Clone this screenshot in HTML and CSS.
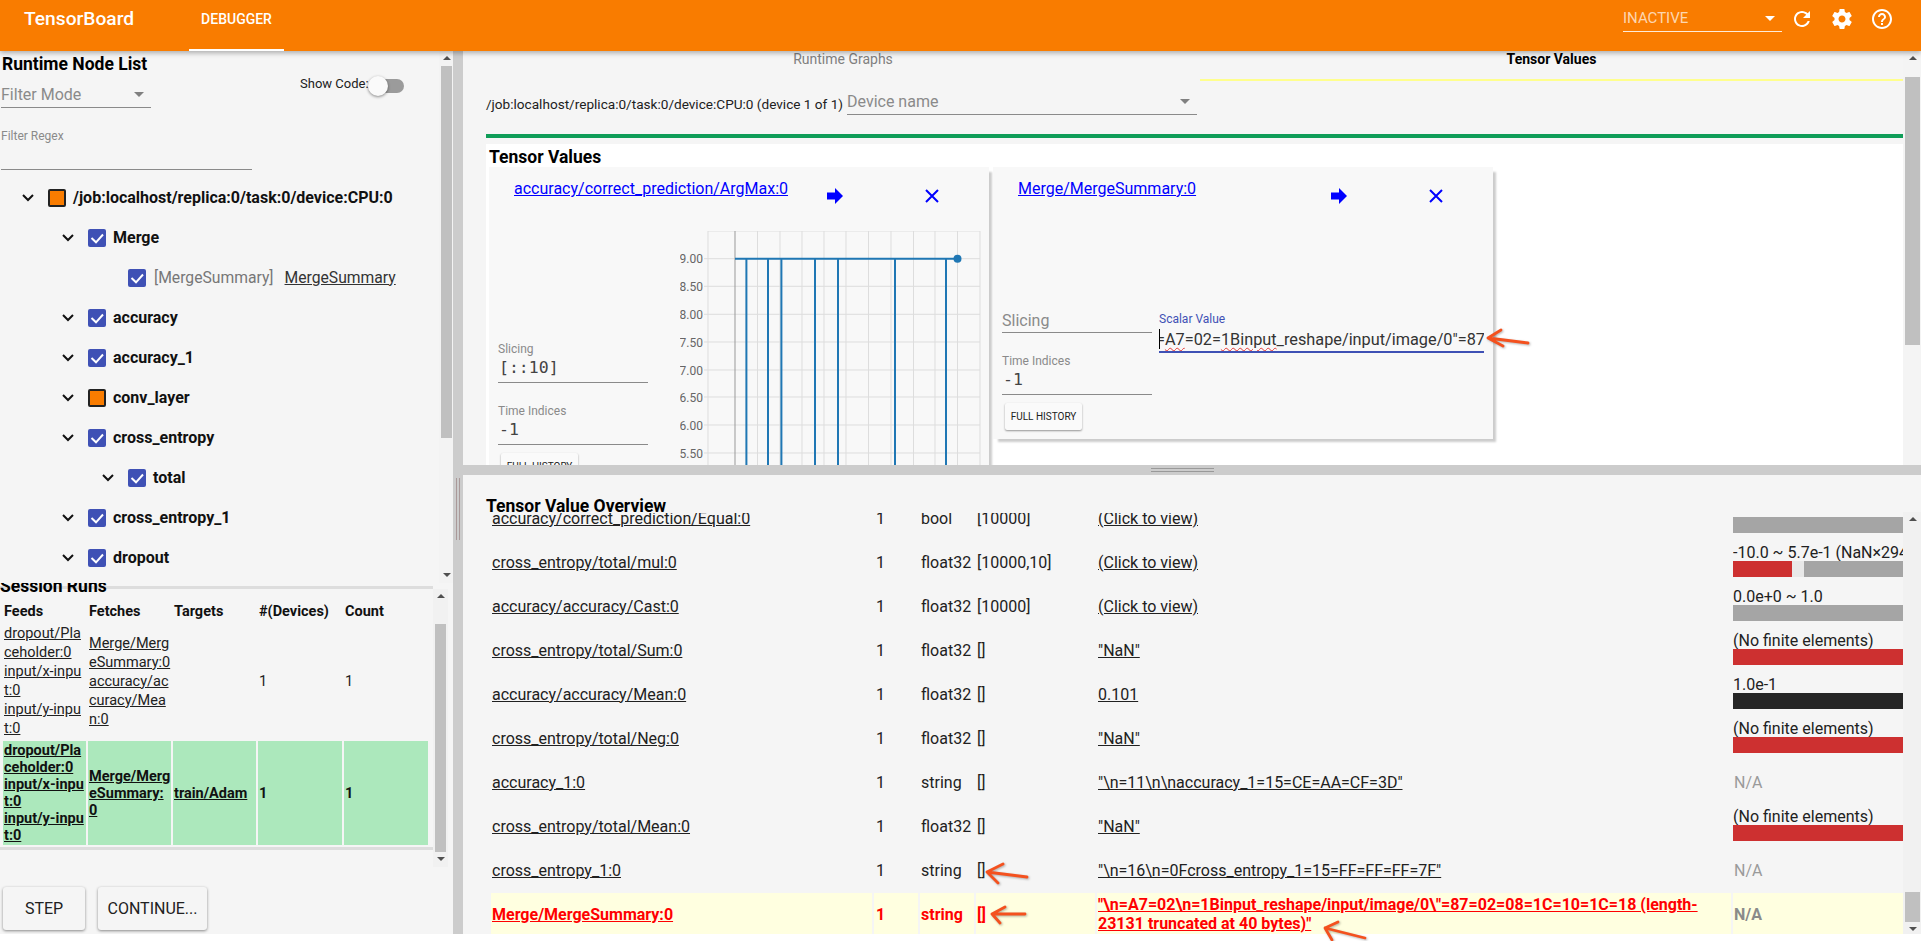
FILE: index.html
```html
<!DOCTYPE html>
<html lang="en">
<head>
<meta charset="utf-8">
<title>TensorBoard</title>
<link rel="stylesheet" href="styles.css">
</head>
<body>
<svg class="defs" width="0" height="0" aria-hidden="true">
  <symbol id="chev" viewBox="0 0 12 8"><polyline points="1,1 6,6 11,1" fill="none" stroke="#111" stroke-width="2"/></symbol>
  <symbol id="check" viewBox="0 0 18 18"><polyline points="3.500,9 8,13.300 15,5.500" fill="none" stroke="#fff" stroke-width="2"/></symbol>
  <symbol id="arrow" viewBox="0 0 16 16"><path d="M0 4.500H8V0L16 8L8 16V11.500H0Z" fill="#0000ff"/></symbol>
  <symbol id="close" viewBox="0 0 14 14"><path d="M1 1L13 13M13 1L1 13" fill="none" stroke="#0000ff" stroke-width="2"/></symbol>
</svg>
<div class="app">
  <header class="topbar">
    <div class="brand">TensorBoard</div>
    <div class="tab">DEBUGGER</div>
    <div class="run-select"><span>INACTIVE</span><i class="caret caret-white"></i></div>
    <svg class="ticon" viewBox="0 0 24 24"><path d="M17.65 6.35C16.2 4.9 14.21 4 12 4c-4.42 0-7.99 3.58-7.99 8s3.57 8 7.99 8c3.73 0 6.84-2.55 7.73-6h-2.08c-.82 2.33-3.04 4-5.65 4-3.31 0-6-2.69-6-6s2.69-6 6-6c1.66 0 3.14.69 4.22 1.78L13 11h7V4l-2.35 2.35z"/></svg>
    <svg class="ticon" viewBox="0 0 24 24"><path d="M19.43 12.98c.04-.32.07-.64.07-.98s-.03-.66-.07-.98l2.11-1.65c.19-.15.24-.42.12-.64l-2-3.46c-.12-.22-.39-.3-.61-.22l-2.49 1c-.52-.4-1.08-.73-1.69-.98l-.38-2.65C14.46 2.18 14.25 2 14 2h-4c-.25 0-.46.18-.49.42l-.38 2.65c-.61.25-1.17.59-1.69.98l-2.49-1c-.23-.09-.49 0-.61.22l-2 3.46c-.13.22-.07.49.12.64l2.11 1.65c-.04.32-.07.65-.07.98s.03.66.07.98l-2.11 1.65c-.19.15-.24.42-.12.64l2 3.46c.12.22.39.3.61.22l2.49-1c.52.4 1.08.73 1.69.98l.38 2.65c.03.24.24.42.49.42h4c.25 0 .46-.18.49-.42l.38-2.65c.61-.25 1.17-.59 1.69-.98l2.49 1c.23.09.49 0 .61-.22l2-3.46c.12-.22.07-.49-.12-.64l-2.11-1.65zM12 15.5c-1.93 0-3.5-1.57-3.5-3.5s1.57-3.5 3.5-3.5 3.5 1.57 3.5 3.5-1.57 3.5-3.5 3.5z"/></svg>
    <svg class="ticon" viewBox="0 0 24 24"><path d="M11 18h2v-2h-2v2zm1-16C6.48 2 2 6.48 2 12s4.48 10 10 10 10-4.48 10-10S17.52 2 12 2zm0 18c-4.41 0-8-3.59-8-8s3.59-8 8-8 8 3.59 8 8-3.59 8-8 8zm0-14c-2.21 0-4 1.79-4 4h2c0-1.1.9-2 2-2s2 .9 2 2c0 2-3 1.75-3 5h2c0-2.25 3-2.5 3-5 0-2.21-1.79-4-4-4z"/></svg>
  </header>

  <div class="main">
    <aside class="left">
      <section class="nodes">
        <div class="nodes-content">
          <h2 class="h-lg node-title">Runtime Node List</h2>
          <div class="filters">
            <div class="filter-col">
              <div class="select filter-mode"><span>Filter Mode</span><i class="caret"></i></div>
              <div class="regex-label">Filter Regex</div>
              <div class="regex-line"></div>
            </div>
            <div class="show-code"><span>Show Code:</span><span class="toggle"><i class="knob"></i></span></div>
          </div>
          <ul class="tree">
            <li class="node lv0 bold"><svg class="chev"><use href="#chev"/></svg><span class="box orange"></span><span>/job:localhost/replica:0/task:0/device:CPU:0</span></li>
            <li class="node lv1 bold"><svg class="chev"><use href="#chev"/></svg><span class="box"><svg class="chk"><use href="#check"/></svg></span><span>Merge</span></li>
            <li class="node lv2 leaf"><span class="box"><svg class="chk"><use href="#check"/></svg></span><span class="op">[MergeSummary]</span><a class="leaf-link">MergeSummary</a></li>
            <li class="node lv1 bold"><svg class="chev"><use href="#chev"/></svg><span class="box"><svg class="chk"><use href="#check"/></svg></span><span>accuracy</span></li>
            <li class="node lv1 bold"><svg class="chev"><use href="#chev"/></svg><span class="box"><svg class="chk"><use href="#check"/></svg></span><span>accuracy_1</span></li>
            <li class="node lv1 bold"><svg class="chev"><use href="#chev"/></svg><span class="box orange"></span><span>conv_layer</span></li>
            <li class="node lv1 bold"><svg class="chev"><use href="#chev"/></svg><span class="box"><svg class="chk"><use href="#check"/></svg></span><span>cross_entropy</span></li>
            <li class="node lv2 bold"><svg class="chev"><use href="#chev"/></svg><span class="box"><svg class="chk"><use href="#check"/></svg></span><span>total</span></li>
            <li class="node lv1 bold"><svg class="chev"><use href="#chev"/></svg><span class="box"><svg class="chk"><use href="#check"/></svg></span><span>cross_entropy_1</span></li>
            <li class="node lv1 bold"><svg class="chev"><use href="#chev"/></svg><span class="box"><svg class="chk"><use href="#check"/></svg></span><span>dropout</span></li>
          </ul>
        </div>
        <div class="sb sb-nodes"><i class="up"></i><i class="thumb"></i><i class="fill"></i><i class="down"></i></div>
      </section>

      <section class="session">
        <h2 class="h-lg session-title">Session Runs</h2>
        <div class="session-body">
          <div class="runs">
            <table class="runs-table">
              <colgroup><col class="c83"><col class="c83"><col class="c83"><col class="c84"><col class="c84"></colgroup>
              <thead><tr><th>Feeds</th><th>Fetches</th><th>Targets</th><th>#(Devices)</th><th>Count</th></tr></thead>
              <tbody>
                <tr><td><a>dropout/Pla<br>ceholder:0</a><br><a>input/x-inpu<br>t:0</a><br><a>input/y-inpu<br>t:0</a></td><td><a>Merge/Merg<br>eSummary:0</a><br><a>accuracy/ac<br>curacy/Mea<br>n:0</a></td><td></td><td>1</td><td>1</td></tr>
                <tr class="active"><td><a>dropout/Pla<br>ceholder:0</a><br><a>input/x-inpu<br>t:0</a><br><a>input/y-inpu<br>t:0</a></td><td><a>Merge/Merg<br>eSummary:<br>0</a></td><td><a>train/Adam</a></td><td>1</td><td>1</td></tr>
              </tbody>
            </table>
          </div>
          <div class="sb sb-runs"><i class="up"></i><i class="thumb"></i><i class="fill"></i><i class="down"></i></div>
        </div>
      </section>

      <div class="actions"><button class="btn btn-step">STEP</button><button class="btn btn-cont">CONTINUE...</button></div>
    </aside>

    <div class="vsplit"><i class="vgrip"></i></div>

    <div class="right">
      <section class="top">
        <div class="top-content">
          <div class="tabs"><div class="t-tab">Runtime Graphs</div><div class="t-tab on">Tensor Values</div></div>
          <div class="device-row">
            <span class="device-text">/job:localhost/replica:0/task:0/device:CPU:0 (device 1 of 1)</span>
            <div class="select device-select"><span>Device name</span><i class="caret"></i></div>
          </div>
          <div class="green"></div>
          <div class="values">
            <h2 class="h-lg values-title">Tensor Values</h2>
            <div class="cards">
              <article class="card">
                <div class="card-head"><a class="tensor-link">accuracy/correct_prediction/ArgMax:0</a><svg class="i-arrow"><use href="#arrow"/></svg><svg class="i-close"><use href="#close"/></svg></div>
                <div class="card-body">
                  <div class="controls controls-a">
                    <div class="lbl">Slicing</div><div class="val">[::10]</div>
                    <div class="lbl lbl-next">Time Indices</div><div class="val">-1</div>
                    <button class="mini">FULL HISTORY</button>
                  </div>
                  <svg class="chart" width="305" height="240" viewBox="0 0 305 240">
                    <g stroke="#ddd" stroke-width="1">
                      <path d="M28 0H300M24 27.700H300M24 55.300H300M24 83.300H300M24 111H300M24 139H300M24 166H300M24 194H300M24 222H300"/>
                      <path d="M28 0V240M77.500 0V240M100 0V240M122 0V240M144 0V240M166 0V240M188.500 0V240M211 0V240M233.500 0V240M255 0V240M277.500 0V240M300 0V240"/>
                    </g>
                    <path d="M55 0V240" stroke="#999" stroke-width="1"/>
                    <path d="M55 27.700H277M66.400 27.700V240M88 27.700V240M101.400 27.700V240M135 27.700V240M158 27.700V240M215 27.700V240M266 27.700V240" stroke="#1f77b4" stroke-width="2" fill="none"/>
                    <circle cx="277.500" cy="27.700" r="4" fill="#1f77b4"/>
                    <g class="ticks">
                      <text x="23" y="32">9.00</text><text x="23" y="60">8.50</text><text x="23" y="88">8.00</text><text x="23" y="116">7.50</text><text x="23" y="144">7.00</text><text x="23" y="171">6.50</text><text x="23" y="199">6.00</text><text x="23" y="227">5.50</text>
                    </g>
                  </svg>
                </div>
              </article>
              <article class="card card-b">
                <div class="card-head"><a class="tensor-link">Merge/MergeSummary:0</a><svg class="i-arrow"><use href="#arrow"/></svg><svg class="i-close"><use href="#close"/></svg></div>
                <div class="card-body">
                  <div class="controls controls-b">
                    <div class="val ph">Slicing</div>
                    <div class="lbl lbl-time">Time Indices</div><div class="val">-1</div>
                    <button class="mini mini-b">FULL HISTORY</button>
                  </div>
                  <div class="scalar">
                    <div class="scalar-label">Scalar Value</div>
                    <div class="scalar-value"><span class="scalar-text">=<span class="typo">A7</span>=02=<span class="typo">1Binput</span>_reshape/input/image/0"=87=02=08</span></div>
                  </div>
                </div>
              </article>
            </div>
          </div>
        </div>
        <div class="sb sb-top"><i class="up"></i><i class="thumb"></i><i class="fill"></i></div>
      </section>

      <div class="hsplit"><i class="hgrip"></i></div>

      <section class="bottom">
        <div class="bottom-content">
          <h2 class="h-lg overview-title">Tensor Value Overview</h2>
          <div class="overview-clip">
            <table class="overview">
              <colgroup><col class="w-name"><col class="w-dev"><col class="w-type"><col class="w-shape"><col class="w-val"><col class="w-health"></colgroup>
              <tbody>
                <tr><td><a>accuracy/correct_prediction/Equal:0</a></td><td>1</td><td>bool</td><td>[10000]</td><td><a>(Click to view)</a></td><td class="health"><div class="h-text"></div><div class="bar"><i class="grey grow"></i></div></td></tr>
                <tr><td><a>cross_entropy/total/mul:0</a></td><td>1</td><td>float32</td><td>[10000,10]</td><td><a>(Click to view)</a></td><td class="health"><div class="h-text">-10.0 ~ 5.7e-1 (NaN×294 | Finite×9706)</div><div class="bar"><i class="red seg-a"></i><i class="pale seg-b"></i><i class="grey grow"></i></div></td></tr>
                <tr><td><a>accuracy/accuracy/Cast:0</a></td><td>1</td><td>float32</td><td>[10000]</td><td><a>(Click to view)</a></td><td class="health"><div class="h-text">0.0e+0 ~ 1.0</div><div class="bar"><i class="grey grow"></i></div></td></tr>
                <tr><td><a>cross_entropy/total/Sum:0</a></td><td>1</td><td>float32</td><td>[]</td><td><a>"NaN"</a></td><td class="health"><div class="h-text">(No finite elements)</div><div class="bar"><i class="red grow"></i></div></td></tr>
                <tr><td><a>accuracy/accuracy/Mean:0</a></td><td>1</td><td>float32</td><td>[]</td><td><a>0.101</a></td><td class="health"><div class="h-text">1.0e-1</div><div class="bar"><i class="black grow"></i></div></td></tr>
                <tr><td><a>cross_entropy/total/Neg:0</a></td><td>1</td><td>float32</td><td>[]</td><td><a>"NaN"</a></td><td class="health"><div class="h-text">(No finite elements)</div><div class="bar"><i class="red grow"></i></div></td></tr>
                <tr><td><a>accuracy_1:0</a></td><td>1</td><td>string</td><td>[]</td><td><a>"\n=11\n\naccuracy_1=15=CE=AA=CF=3D"</a></td><td class="na">N/A</td></tr>
                <tr><td><a>cross_entropy/total/Mean:0</a></td><td>1</td><td>float32</td><td>[]</td><td><a>"NaN"</a></td><td class="health"><div class="h-text">(No finite elements)</div><div class="bar"><i class="red grow"></i></div></td></tr>
                <tr><td><a>cross_entropy_1:0</a></td><td>1</td><td>string</td><td>[]</td><td><a>"\n=16\n=0Fcross_entropy_1=15=FF=FF=FF=7F"</a></td><td class="na">N/A</td></tr>
                <tr class="hit"><td><a>Merge/MergeSummary:0</a></td><td>1</td><td>string</td><td>[]</td><td><a>"\n=A7=02\n=1Binput_reshape/input/image/0\"=87=02=08=1C=10=1C=18 (length-23131 truncated at 40 bytes)"</a></td><td class="na">N/A</td></tr>
              </tbody>
            </table>
          </div>
        </div>
        <div class="sb sb-bottom"><i class="up"></i><i class="fill"></i><i class="thumb"></i><i class="down"></i></div>
      </section>
    </div>
  </div>
</div>

<svg class="marks" width="1921" height="941" viewBox="0 0 1921 941" aria-hidden="true">
  <g class="mark">
    <path d="M1528 343L1488 338M1501 330L1488 338L1503 346"/>
    <path d="M1027 877L987 872M1003 864L987 872L998 883"/>
    <path d="M1025 914L992 914M1005 907L992 914L1000 923"/>
    <path d="M1365 938L1325 928M1338 922L1325 928L1332 940"/>
  </g>
</svg>
</body>
</html>
```

FILE: styles.css
```css
* { box-sizing: border-box; }
html, body { margin: 0; height: 941px; overflow: hidden; background: #fff; }
body { font-family: Roboto, "Liberation Sans", sans-serif; font-size: 16px; color: #212121; position: relative; }
.defs { position: absolute; }
a { color: inherit; text-decoration: underline; }
i { display: block; }
ul { list-style: none; margin: 0; padding: 0; }
.h-lg { margin: 0; font-size: 17.5px; font-weight: 700; line-height: 21px; color: #000; }

.app { height: 934px; display: flex; flex-direction: column; }

/* top bar */
.topbar { height: 51px; flex: none; background: #f97c00; color: #fff; display: flex; align-items: flex-start; box-shadow: 0 2px 5px rgba(0,0,0,.3); position: relative; z-index: 3; padding-right: 27px; }
.brand { font-size: 19.2px; font-weight: 500; line-height: 24px; margin: 7px 0 0 24px; width: 165px; }
.tab { width: 95px; height: 51px; text-align: center; font-size: 14px; font-weight: 500; line-height: 16px; padding-top: 11px; border-bottom: 2px solid #fff; }
.run-select { margin-left: auto; margin-top: 7px; width: 159px; height: 25px; padding-bottom: 2px; border-bottom: 1px solid rgba(255,255,255,.85); display: flex; align-items: center; justify-content: space-between; font-size: 15px; font-weight: 400; color: rgba(255,255,255,.7); padding-right: 7px; }
.ticon { width: 24px; height: 24px; fill: #fff; margin-top: 7px; margin-left: 16px; flex: none; }
.run-select + .ticon { margin-left: 8px; }

.caret { width: 0; height: 0; border-left: 5px solid transparent; border-right: 5px solid transparent; border-top: 5px solid #808080; }
.caret-white { border-top-color: #fff; }

.main { flex: 1; display: flex; min-height: 0; }

/* left column */
.left { width: 453px; flex: none; background: #f5f5f5; display: flex; flex-direction: column; }
.nodes { height: 532px; flex: none; display: flex; overflow: hidden; }
.nodes-content { width: 439px; flex: none; overflow: hidden; }
.node-title { padding: 3px 0 0 2px; height: 23px; }
.filters { display: flex; }
.filter-col { width: 251px; margin-left: 1px; }
.select { display: flex; justify-content: space-between; align-items: center; border-bottom: 1px solid #8a8a8a; color: #8a8a8a; font-size: 16px; padding-top: 8px; }
.filter-mode { width: 150px; height: 34px; padding-right: 7px; }
.regex-label { font-size: 12px; color: #8a8a8a; line-height: 14px; margin-top: 21px; }
.regex-line { height: 27px; border-bottom: 1px solid #8a8a8a; }
.show-code { display: flex; font-size: 13px; margin-left: 48px; height: 24px; margin-top: -2px; line-height: 16px; align-items: center; color: #212121; white-space: nowrap; }
.toggle { width: 36px; height: 14px; margin: 4px 0 0 -1px; border-radius: 7px; background: linear-gradient(to right, transparent 10px, #9b9b9b 10px); display: block; position: relative; }
.knob { width: 20px; height: 20px; border-radius: 50%; background: #fafafa; box-shadow: 0 1px 3px rgba(0,0,0,.45); margin-top: -3px; }
.tree { margin-top: 8px; }
.node { height: 40px; display: flex; align-items: center; font-size: 16px; white-space: nowrap; }
.node > span:not(.box), .leaf-link { margin-top: -2px; }
.bold { font-weight: 700; color: #111; }
.lv0 { padding-left: 22px; }
.lv1 { padding-left: 62px; }
.lv2 { padding-left: 102px; }
.leaf { padding-left: 128px; font-size: 15.7px; }
.chev { width: 12px; height: 8px; margin-right: 14px; flex: none; }
.box { width: 18px; height: 18px; border-radius: 2px; background: #3f51b5; margin-right: 7px; flex: none; display: block; }
.box.orange { background: #f97c00; border: 2px solid #222; }
.chk { width: 18px; height: 18px; display: block; }
.leaf .box { margin-right: 8px; }
.op { color: #777; margin-right: 11px; }
.leaf-link { color: #333; }

/* fake scrollbars */
.sb { flex: none; display: flex; flex-direction: column; background: #f1f1f1; align-items: stretch; }
.sb .fill { flex: 1; }
.sb .thumb { background: #c0c0c0; }
.sb .up, .sb .down { height: 15px; flex: none; position: relative; }
.sb .up::after, .sb .down::after { content: ""; position: absolute; left: 50%; margin-left: -4px; top: 5px; border-left: 4px solid transparent; border-right: 4px solid transparent; }
.sb .up::after { border-bottom: 4px solid #505050; }
.sb .down::after { border-top: 4px solid #505050; }
.sb-nodes { width: 14px; background: #f3f3f3; padding: 0 1px 0 2px; }
.sb-nodes .thumb { height: 372px; }
.sb-runs { width: 15px; margin-top: 3px; height: 278px; padding: 0 2px; background: #f1f1f1; }
.sb-runs .thumb { height: 228px; margin-top: 20px; }

/* session runs */
.session { height: 284px; flex: none; overflow: hidden; }
.session-title { height: 10px; margin-top: -7px; position: relative; z-index: 1; overflow: visible; }
.session-body { display: flex; }
.runs { width: 433px; height: 264px; border-top: 3px solid #ddd; border-bottom: 3px solid #ddd; flex: none; padding: 12px 0 0 1px; overflow: hidden; }
.runs-table { border-collapse: separate; border-spacing: 2px; table-layout: fixed; width: 429px; font-size: 14.5px; }
.c83 { width: 83px; }
.c84 { width: 84px; }
.runs-table th { text-align: left; font-size: 14.5px; font-weight: 700; padding: 0 1px; line-height: 18px; color: #111; }
.runs-table td { padding: 1px; line-height: 19px; white-space: nowrap; vertical-align: middle; height: 116px; }
.runs-table .active td { background: #ace8bc; font-weight: 700; line-height: 17px; color: #111; height: 104px; }
.actions { display: flex; padding: 20px 0 0 3px; }
.btn { height: 43px; border: 0; border-radius: 3px; background: #f5f5f5; font: 400 16px Roboto, sans-serif; color: #212121; box-shadow: 0 1px 3px rgba(0,0,0,.45); padding: 0; }
.btn-step { width: 82px; margin-right: 13px; }
.btn-cont { width: 109px; }

.vsplit { width: 10px; flex: none; background: #ccc; padding: 427px 0 0 3px; }
.vgrip { width: 4px; height: 62px; border-left: 1px solid #a99; border-right: 1px solid #a99; }

/* right column */
.right { flex: 1; display: flex; flex-direction: column; min-width: 0; }
.top { height: 414px; flex: none; display: flex; background: #f5f5f5; overflow: hidden; }
.top-content { flex: 1; min-width: 0; padding-left: 23px; overflow: hidden; }
.tabs { display: flex; height: 30px; }
.t-tab { flex: none; width: 714px; text-align: center; font-size: 14px; line-height: 16px; color: #808080; }
.t-tab.on { width: 703px; color: #000; font-weight: 700; border-bottom: 2px solid #ffff8d; }
.device-row { height: 53px; display: flex; align-items: flex-start; font-size: 13.6px; }
.device-text { margin-top: 15px; line-height: 16px; color: #212121; width: 361px; white-space: nowrap; }
.device-select { width: 350px; height: 34px; padding-right: 7px; }
.green { height: 4px; background: #0f9d58; }
.values { margin-top: 6px; background: #fff; height: 330px; padding: 2px 0 0 3px; }
.values-title { height: 21px; padding-top: 1px; }
.cards { display: flex; }
.card { width: 500px; height: 272px; background: #f8f8f8; margin-right: 4px; box-shadow: 4px 4px 2px -1px #ccc; flex: none; }
.card:first-child { height: 320px; }
.card-head { height: 64px; display: flex; align-items: flex-start; }
.tensor-link { color: #0000ff; margin: 12px 0 0 25px; width: 313px; flex: none; line-height: 19px; white-space: nowrap; }
.i-arrow { width: 16px; height: 16px; margin: 21px 82px 0 0; flex: none; }
.i-close { width: 14px; height: 14px; margin-top: 22px; flex: none; }
.card-body { display: flex; }
.controls { width: 150px; flex: none; margin-left: 9px; }
.controls-a { padding-top: 111px; margin-right: 32px; }
.controls-b { padding-top: 79px; margin-right: 7px; }
.lbl { font-size: 12px; color: #8a8a8a; line-height: 14px; }
.lbl-next { margin-top: 21px; }
.lbl-time { margin-top: 21px; }
.val { font-family: "DejaVu Sans Mono", monospace; font-size: 16.5px; color: #444; height: 27px; line-height: 20px; padding: 2px 0 0 1px; border-bottom: 1px solid #8a8a8a; }
.val.ph { font-family: Roboto, sans-serif; font-size: 16px; color: #8a8a8a; padding-left: 0; height: 23px; line-height: 18px; }
.mini { display: block; height: 27px; width: 77px; margin: 8px 0 0 3px; border: 0; border-radius: 2px; background: #fafafa; font: 400 10px Roboto, sans-serif; color: #212121; padding: 0; box-shadow: 0 1px 2px rgba(0,0,0,.4); white-space: nowrap; }
.chart { flex: none; display: block; }
.ticks text { font: 12px Roboto, sans-serif; fill: #666; text-anchor: end; }
.scalar { width: 325px; flex: none; padding-top: 81px; }
.scalar-label { font-size: 12px; line-height: 14px; color: #3f51b5; }
.scalar-value { height: 27px; padding-top: 2px; border-bottom: 2px solid #3f51b5; overflow: hidden; white-space: nowrap; line-height: 23px; font-size: 16.3px; color: #333; position: relative; }
.scalar-value::before { content: ""; position: absolute; left: 0; top: 3px; width: 1px; height: 20px; background: #000; }
.scalar-text { margin-left: -3px; display: inline-block; }
.typo { text-decoration: underline wavy #e53935 1px; text-underline-offset: 2px; }
.sb-top { width: 18px; padding: 0 1px 0 2px; background: #f4f4f4; }
.sb-top .up { height: 26px; }
.sb-top .thumb { height: 268px; }

.hsplit { height: 10px; flex: none; background: #ccc; padding: 3px 0 0 688px; }
.hgrip { width: 63px; height: 4px; border-top: 1px solid #999; border-bottom: 1px solid #999; }

.bottom { height: 459px; flex: none; display: flex; background: #f5f5f5; overflow: hidden; }
.bottom-content { width: 1440px; flex: none; overflow: hidden; }
.overview-title { padding: 22px 0 0 23px; height: 38px; line-height: 18px; position: relative; z-index: 1; white-space: nowrap; }
.overview-clip { height: 421px; overflow: hidden; }
.overview { margin: -18px 0 0 26px; border-collapse: separate; border-spacing: 2px; table-layout: fixed; width: 1416px; }
.w-name { width: 381px; }
.w-dev { width: 44px; }
.w-type { width: 54px; }
.w-shape { width: 119px; }
.w-val { width: 634px; }
.w-health { width: 170px; }
.overview td { height: 42px; padding: 0 1px; line-height: 19px; color: #212121; vertical-align: middle; overflow: hidden; }
.overview td:nth-child(2) { padding-left: 2px; }
.overview .health { padding: 4px 0 0; vertical-align: top; }
.h-text { height: 16px; line-height: 16px; white-space: nowrap; }
.bar { display: flex; height: 16px; }
.grow { flex: 1; }
.grey { background: #a5a5a5; }
.red { background: #cd3030; }
.black { background: #252525; }
.pale { background: #e8e8e8; }
.seg-a { width: 59px; }
.seg-b { width: 12px; }
.overview .na { color: #9a9a9a; }
.overview .hit td { background: #ffffe0; color: #f00; font-weight: 700; }
.overview .hit .na { color: #8a8a8a; }
.sb-bottom { width: 18px; margin-top: 37px; padding: 0 1px 0 2px; background: #f1f1f1; }
.sb-bottom .thumb { height: 30px; }
.sb-bottom .down { height: 12px; }

/* hand-drawn annotations */
.marks { position: absolute; left: 0; top: 0; z-index: 5; pointer-events: none; }
.mark path { fill: none; stroke: #f4511e; stroke-width: 2.8; stroke-linecap: round; stroke-linejoin: round; filter: drop-shadow(1px 1px 1px rgba(0,0,0,.3)); }
```
